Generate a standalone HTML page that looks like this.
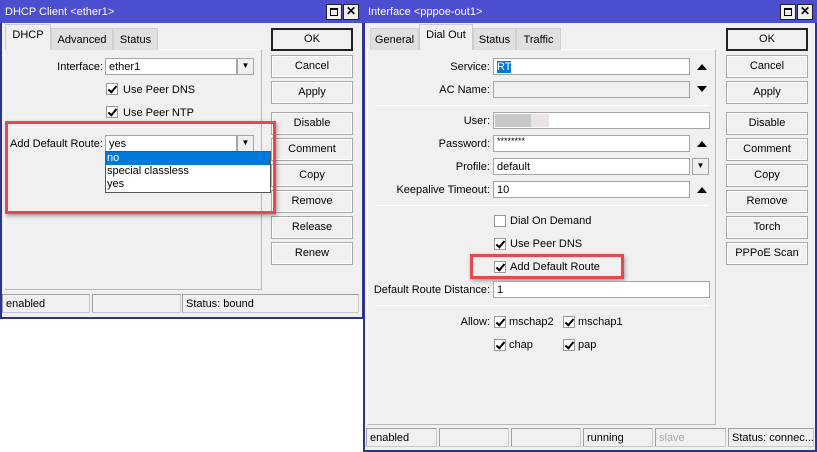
<!DOCTYPE html>
<html><head><meta charset="utf-8"><style>
*{box-sizing:border-box;margin:0;padding:0}
body{width:817px;height:452px;background:#fff;position:relative;overflow:hidden;font-family:"Liberation Sans",sans-serif;font-size:11px;color:#000}
.a{position:absolute}
div{white-space:nowrap}
.win{position:absolute;background:#f0f0f0;border:2px solid #2f3390;border-top:none}
.title{position:absolute;left:0;top:0;right:0;height:23px;background:#4a4ecf;color:#fff;font-size:11px;padding:6px 0 0 5px}
.wb{position:absolute;top:4px;width:16px;height:16px;background:#f0f0f0;border:1px solid #222}
.btn{position:absolute;width:82px;height:23px;border:1px solid #a8a8a8;background:#f0f0f0;text-align:center;line-height:21px;box-shadow:inset 0 0 0 1px #fff}
.btn.ok{border:2px solid #222;box-shadow:none;line-height:19px}
.tab{position:absolute;height:22px;background:#e0e0e0;border:1px solid #d0d0d0;border-bottom:none;padding:5px 0 0;text-align:center}
.tab.act{background:#f0f0f0;height:26px;border-color:#ccc;padding-top:4px}
.panel{position:absolute;border:1px solid #b8b8b8;border-top-color:#fff;border-left:none}
.inp{position:absolute;height:17px;background:#fff;border:1px solid #a6a6a6;padding:1px 3px;line-height:14px}
.lbl{position:absolute;text-align:right;line-height:19px}
.cb{position:absolute;width:12px;height:12px;background:#fff;border:1px solid #999}
.cb.on::after{content:"";position:absolute;left:3px;top:0px;width:3px;height:7px;border:solid #000;border-width:0 2px 2px 0;transform:rotate(40deg)}
.ct{position:absolute;line-height:14px}
.dd{position:absolute;width:17px;height:17px;background:#f0f0f0;border:1px solid #a6a6a6;font-size:8px;text-align:center;line-height:14px}
.sep{position:absolute;height:1px;background:#c8c8c8;border-bottom:1px solid #fff}
.sb{position:absolute;height:19px;border:1px solid #c8c8c8;border-top-color:#a0a0a0;border-left-color:#a0a0a0;padding:2px 3px;line-height:14px;overflow:hidden}
.red{position:absolute;border:3px solid #e8474b;box-shadow:1px 2px 4px rgba(0,0,0,.35)}
.arr{position:absolute;width:0;height:0;border-left:5px solid transparent;border-right:5px solid transparent}
</style></head><body>

<!-- LEFT WINDOW -->
<div class="win" style="left:0;top:0;width:364px;height:319px">
 <div class="title" style="left:-2px;right:-2px">DHCP Client &lt;ether1&gt;</div>
 <div class="wb" style="left:324px"><div class="a" style="left:3px;top:3px;width:8px;height:8px;border:1px solid #000;border-top-width:2px"></div></div>
 <div class="wb" style="left:341px;font-weight:bold;text-align:center;line-height:13px;font-size:12px">✕</div>
 <div class="panel" style="left:2px;top:49px;width:258px;height:241px;border-left:1px solid #fff"></div>
 <div class="tab act" style="left:3px;top:24px;width:46px">DHCP</div>
 <div class="tab" style="left:49px;top:28px;width:62px">Advanced</div>
 <div class="tab" style="left:111px;top:28px;width:45px">Status</div>
 <div class="lbl" style="left:0;top:58px;width:101px">Interface:</div>
 <div class="inp" style="left:103px;top:58px;width:132px">ether1</div>
 <div class="dd" style="left:235px;top:58px">▼</div>
 <div class="cb on" style="left:104px;top:83px"></div><div class="ct" style="left:121px;top:83px">Use Peer DNS</div>
 <div class="cb on" style="left:104px;top:106px"></div><div class="ct" style="left:121px;top:106px">Use Peer NTP</div>
 <div class="sep" style="left:8px;top:127px;width:245px"></div>
 <div class="lbl" style="left:8px;top:135px;text-align:left">Add Default Route:</div>
 <div class="inp" style="left:103px;top:135px;width:132px">yes</div>
 <div class="dd" style="left:235px;top:135px">▼</div>
 <div class="a" style="left:103px;top:151px;width:166px;height:42px;background:#fff;border:1px solid #555;line-height:13px">
  <div style="background:#0078d7;color:#fff;padding-left:1px">no</div>
  <div style="padding-left:1px">special classless</div>
  <div style="padding-left:1px">yes</div>
 </div>
 <div class="btn ok" style="left:269px;top:28px">OK</div>
 <div class="btn" style="left:269px;top:55px">Cancel</div>
 <div class="btn" style="left:269px;top:81px">Apply</div>
 <div class="btn" style="left:269px;top:112px">Disable</div>
 <div class="btn" style="left:269px;top:138px">Comment</div>
 <div class="btn" style="left:269px;top:164px">Copy</div>
 <div class="btn" style="left:269px;top:190px">Remove</div>
 <div class="btn" style="left:269px;top:216px">Release</div>
 <div class="btn" style="left:269px;top:242px">Renew</div>
 <div class="red" style="left:3px;top:121px;width:271px;height:93px"></div>
 <div class="sb" style="left:0;top:294px;width:88px">enabled</div>
 <div class="sb" style="left:90px;top:294px;width:89px"></div>
 <div class="sb" style="left:180px;top:294px;width:177px">Status: bound</div>
</div>

<!-- RIGHT WINDOW -->
<div class="win" style="left:363px;top:0;width:454px;height:452px">
 <div class="title" style="left:-2px;right:-2px">Interface &lt;pppoe-out1&gt;</div>
 <div class="wb" style="left:415px"><div class="a" style="left:3px;top:3px;width:8px;height:8px;border:1px solid #000;border-top-width:2px"></div></div>
 <div class="wb" style="left:432px;font-weight:bold;text-align:center;line-height:13px;font-size:12px">✕</div>
 <div class="panel" style="left:2px;top:49px;width:349px;height:376px;border-left:1px solid #fff"></div>
 <div class="tab" style="left:5px;top:28px;width:49px">General</div>
 <div class="tab act" style="left:54px;top:24px;width:54px">Dial Out</div>
 <div class="tab" style="left:108px;top:28px;width:43px">Status</div>
 <div class="tab" style="left:151px;top:28px;width:45px">Traffic</div>

 <div class="lbl" style="left:0;top:58px;width:125px">Service:</div>
 <div class="inp" style="left:128px;top:58px;width:197px"><span style="background:#0078d7;color:#fff">RT</span></div>
 <div class="arr" style="left:332px;top:64px;border-bottom:6px solid #000"></div>
 <div class="lbl" style="left:0;top:81px;width:125px">AC Name:</div>
 <div class="inp" style="left:128px;top:81px;width:197px;background:#f0f0f0"></div>
 <div class="arr" style="left:332px;top:86px;border-top:6px solid #000"></div>
 <div class="sep" style="left:10px;top:105px;width:334px"></div>
 <div class="lbl" style="left:0;top:112px;width:125px">User:</div>
 <div class="inp" style="left:128px;top:112px;width:217px"><div class="a" style="left:1px;top:1px;width:36px;height:13px;background:#c8c8c8"></div><div class="a" style="left:37px;top:1px;width:18px;height:13px;background:#ebe3e5"></div></div>
 <div class="lbl" style="left:0;top:135px;width:125px">Password:</div>
 <div class="inp" style="left:128px;top:135px;width:197px;font-size:9px;line-height:9px">********</div>
 <div class="arr" style="left:332px;top:141px;border-bottom:6px solid #000"></div>
 <div class="lbl" style="left:0;top:158px;width:125px">Profile:</div>
 <div class="inp" style="left:128px;top:158px;width:197px">default</div>
 <div class="dd" style="left:327px;top:158px">▼</div>
 <div class="lbl" style="left:0;top:181px;width:125px">Keepalive Timeout:</div>
 <div class="inp" style="left:128px;top:181px;width:197px">10</div>
 <div class="arr" style="left:332px;top:187px;border-bottom:6px solid #000"></div>
 <div class="sep" style="left:10px;top:205px;width:334px"></div>
 <div class="cb" style="left:129px;top:215px"></div><div class="ct" style="left:145px;top:214px">Dial On Demand</div>
 <div class="cb on" style="left:129px;top:238px"></div><div class="ct" style="left:145px;top:237px">Use Peer DNS</div>
 <div class="cb on" style="left:129px;top:261px"></div><div class="ct" style="left:145px;top:260px">Add Default Route</div>
 <div class="red" style="left:105px;top:254px;width:154px;height:25px"></div>
 <div class="lbl" style="left:0;top:281px;width:125px">Default Route Distance:</div>
 <div class="inp" style="left:128px;top:281px;width:217px">1</div>
 <div class="sep" style="left:10px;top:305px;width:334px"></div>
 <div class="lbl" style="left:0;top:313px;width:125px">Allow:</div>
 <div class="cb on" style="left:129px;top:316px"></div><div class="ct" style="left:144px;top:315px">mschap2</div>
 <div class="cb on" style="left:198px;top:316px"></div><div class="ct" style="left:213px;top:315px">mschap1</div>
 <div class="cb on" style="left:129px;top:339px"></div><div class="ct" style="left:144px;top:338px">chap</div>
 <div class="cb on" style="left:198px;top:339px"></div><div class="ct" style="left:213px;top:338px">pap</div>

 <div class="btn ok" style="left:361px;top:28px">OK</div>
 <div class="btn" style="left:361px;top:55px">Cancel</div>
 <div class="btn" style="left:361px;top:81px">Apply</div>
 <div class="btn" style="left:361px;top:112px">Disable</div>
 <div class="btn" style="left:361px;top:138px">Comment</div>
 <div class="btn" style="left:361px;top:164px">Copy</div>
 <div class="btn" style="left:361px;top:190px">Remove</div>
 <div class="btn" style="left:361px;top:216px">Torch</div>
 <div class="btn" style="left:361px;top:242px">PPPoE Scan</div>

 <div class="sb" style="left:1px;top:428px;width:71px">enabled</div>
 <div class="sb" style="left:74px;top:428px;width:70px"></div>
 <div class="sb" style="left:146px;top:428px;width:70px"></div>
 <div class="sb" style="left:218px;top:428px;width:70px">running</div>
 <div class="sb" style="left:290px;top:428px;width:71px;color:#aaa">slave</div>
 <div class="sb" style="left:363px;top:428px;width:86px">Status: connec...</div>
</div>
</body></html>
